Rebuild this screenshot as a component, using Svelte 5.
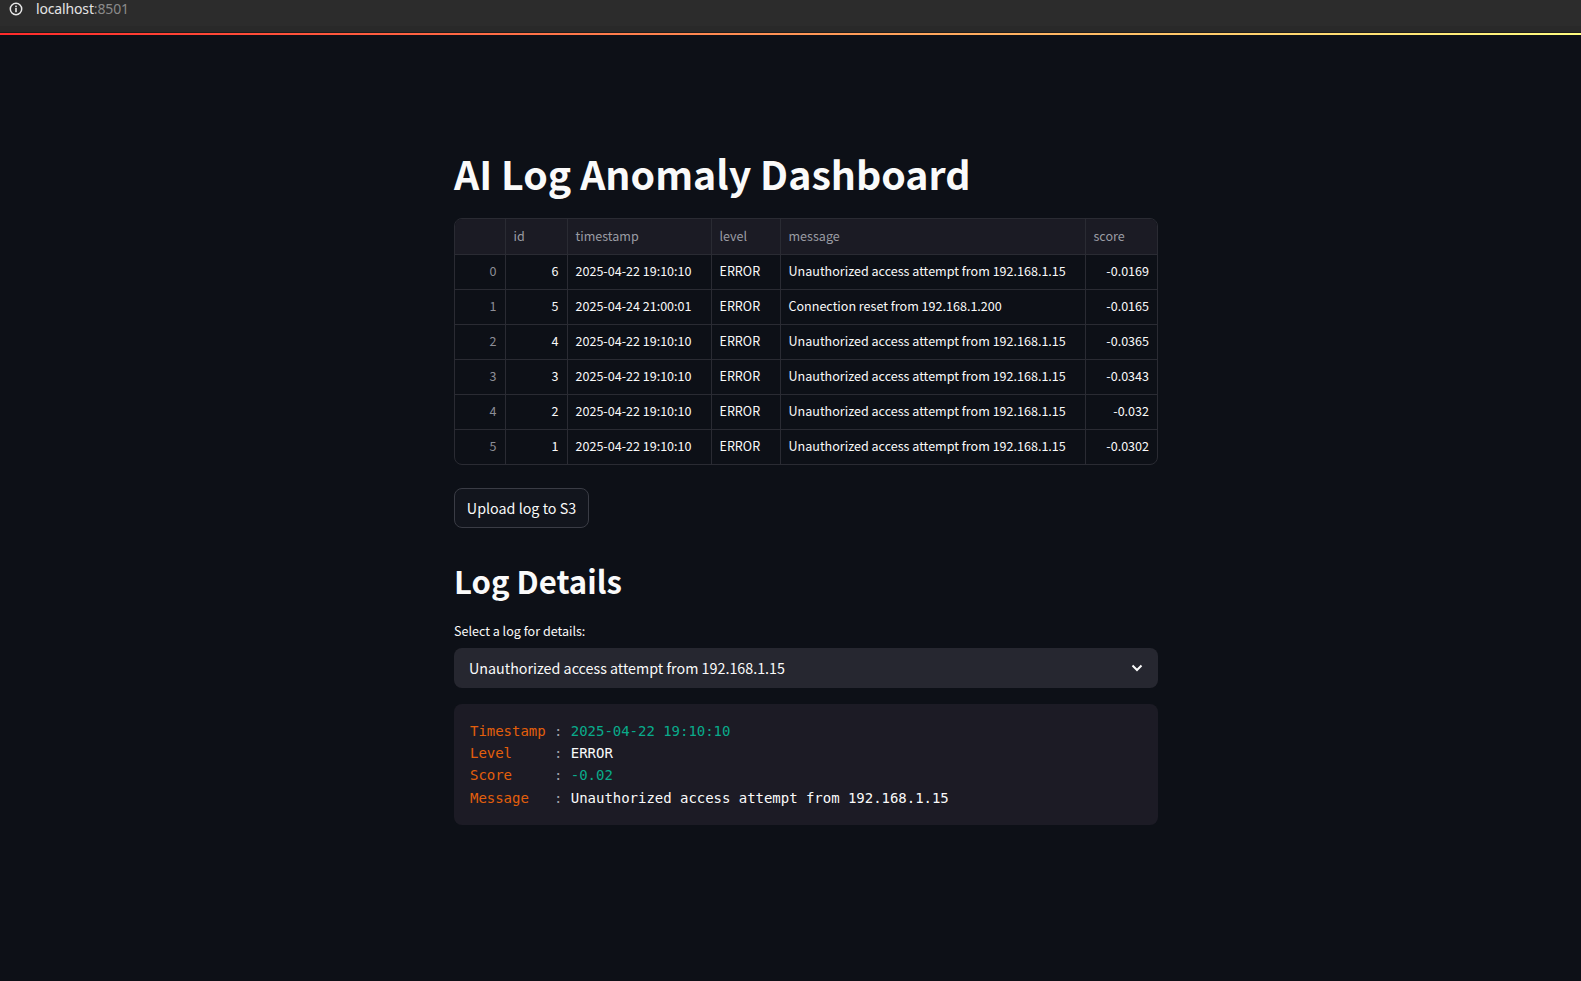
<script>
    const rows = [
        { id: 6, timestamp: '2025-04-22 19:10:10', level: 'ERROR', message: 'Unauthorized access attempt from 192.168.1.15', score: '-0.0169' },
        { id: 5, timestamp: '2025-04-24 21:00:01', level: 'ERROR', message: 'Connection reset from 192.168.1.200', score: '-0.0165' },
        { id: 4, timestamp: '2025-04-22 19:10:10', level: 'ERROR', message: 'Unauthorized access attempt from 192.168.1.15', score: '-0.0365' },
        { id: 3, timestamp: '2025-04-22 19:10:10', level: 'ERROR', message: 'Unauthorized access attempt from 192.168.1.15', score: '-0.0343' },
        { id: 2, timestamp: '2025-04-22 19:10:10', level: 'ERROR', message: 'Unauthorized access attempt from 192.168.1.15', score: '-0.032' },
        { id: 1, timestamp: '2025-04-22 19:10:10', level: 'ERROR', message: 'Unauthorized access attempt from 192.168.1.15', score: '-0.0302' }
    ];
</script>

<div class="addressbar">
    <svg class="info" width="14" height="14" viewBox="0 0 14 14" fill="none">
        <circle cx="7" cy="7" r="5.7" stroke="#e8e8e8" stroke-width="1.5" />
        <rect x="6.2" y="6" width="1.6" height="4.2" fill="#e8e8e8" />
        <rect x="6.2" y="3.6" width="1.6" height="1.6" fill="#e8e8e8" />
    </svg>
    <span class="url">localhost<span class="port">:8501</span></span>
</div>
<div class="stripe"></div>

<main>
    <h1>AI Log Anomaly Dashboard</h1>

    <div class="frame">
        <table>
            <colgroup>
                <col class="c-index" />
                <col class="c-id" />
                <col class="c-time" />
                <col class="c-level" />
                <col class="c-message" />
                <col class="c-score" />
            </colgroup>
            <thead>
                <tr>
                    <th></th>
                    <th>id</th>
                    <th>timestamp</th>
                    <th>level</th>
                    <th>message</th>
                    <th>score</th>
                </tr>
            </thead>
            <tbody>
                {#each rows as row, i}
                    <tr>
                        <td class="num index">{i}</td>
                        <td class="num">{row.id}</td>
                        <td>{row.timestamp}</td>
                        <td>{row.level}</td>
                        <td>{row.message}</td>
                        <td class="num">{row.score}</td>
                    </tr>
                {/each}
            </tbody>
        </table>
    </div>

    <button class="upload">Upload log to S3</button>

    <h2>Log Details</h2>

    <div class="label">Select a log for details:</div>
    <div class="select">
        <span>Unauthorized access attempt from 192.168.1.15</span>
        <svg width="12" height="8" viewBox="0 0 12 8" fill="none">
            <path d="M1.5 1.5 6 6l4.5-4.5" stroke="#fafafa" stroke-width="2" />
        </svg>
    </div>

    <pre class="code"><span class="key">Timestamp</span> <span class="sep">:</span> <span class="val">2025-04-22 19:10:10</span>
<span class="key">Level</span>     <span class="sep">:</span> ERROR
<span class="key">Score</span>     <span class="sep">:</span> <span class="val">-0.02</span>
<span class="key">Message</span>   <span class="sep">:</span> Unauthorized access attempt from 192.168.1.15</pre>
</main>

<style>
    :global(body) {
        background: #0d1017;
        color: #fafafa;
        font-family: "Noto Sans CJK JP", "Noto Sans", sans-serif;
        overflow: hidden;
    }

    .addressbar {
        display: flex;
        align-items: center;
        gap: 13px;
        height: 33px;
        box-sizing: border-box;
        padding: 0 0 16px 9px;
        background: linear-gradient(#2c2c2c 26px, #292929 26px, #292929 32px, #1c1c1c 32px);
        font-size: 14px;
    }

    .info {
        flex: none;
    }

    .url {
        color: #e4e4e4;
        line-height: 18px;
        font-family: "Noto Sans", sans-serif;
        letter-spacing: -0.15px;
    }

    .port {
        color: #8a8a8a;
    }

    .stripe {
        height: 2px;
        background: linear-gradient(90deg, #ff2b2b, #fffd80);
    }

    main {
        width: 704px;
        margin-left: 454px;
        padding-top: 112px;
    }

    h1 {
        margin: 0 0 19px;
        font-size: 39.3px;
        line-height: 52px;
        font-weight: 700;
    }

    h2 {
        margin: 31px 0 18px;
        font-size: 31.1px;
        line-height: 44px;
        font-weight: 600;
    }

    .frame {
        border: 1px solid #2a2b33;
        border-radius: 8px;
        overflow: hidden;
        box-sizing: border-box;
    }

    table {
        width: 100%;
        table-layout: fixed;
        border-collapse: collapse;
        font-size: 12.55px;
    }

    .c-index { width: 50px; }
    .c-id { width: 62px; }
    .c-time { width: 144px; }
    .c-level { width: 69px; }
    .c-message { width: 305px; }

    th, td {
        height: 35px;
        padding: 0 8px 2px;
        box-sizing: border-box;
        border: 1px solid #2a2b33;
        white-space: nowrap;
        text-align: left;
        font-weight: 400;
    }

    tr > :first-child { border-left: 0; }
    tr > :last-child { border-right: 0; }
    thead th { border-top: 0; }
    tbody tr:last-child td { border-bottom: 0; }

    th {
        background: #1b1b24;
        color: #9a9ba3;
    }

    td {
        color: #fafafa;
    }

    td.num {
        text-align: right;
    }

    td.index {
        color: #8d8e96;
    }

    .upload {
        display: block;
        margin-top: 23px;
        width: 135px;
        height: 40px;
        padding: 0 0 2px;
        border: 1px solid #3a3c45;
        border-radius: 8px;
        background: #12151d;
        color: #fafafa;
        font-family: inherit;
        font-size: 14.3px;
    }

    .label {
        font-size: 12.55px;
        line-height: 20px;
        margin-bottom: 7px;
    }

    .select {
        display: flex;
        align-items: center;
        justify-content: space-between;
        height: 40px;
        padding: 0 15px;
        border-radius: 8px;
        background: #262730;
        font-size: 14.3px;
    }

    .select span {
        padding-bottom: 2px;
    }

    .code {
        margin: 16px 0 0;
        padding: 15.6px 16px 15.8px;
        border-radius: 8px;
        background: #1c1b25;
        color: #fafafa;
        font-family: "DejaVu Sans Mono", monospace;
        font-size: 14px;
        letter-spacing: -0.03px;
        line-height: 22.4px;
    }

    .key { color: #e35f0c; }
    .sep { color: #a0a0a8; }
    .val { color: #09ab8b; }
</style>
